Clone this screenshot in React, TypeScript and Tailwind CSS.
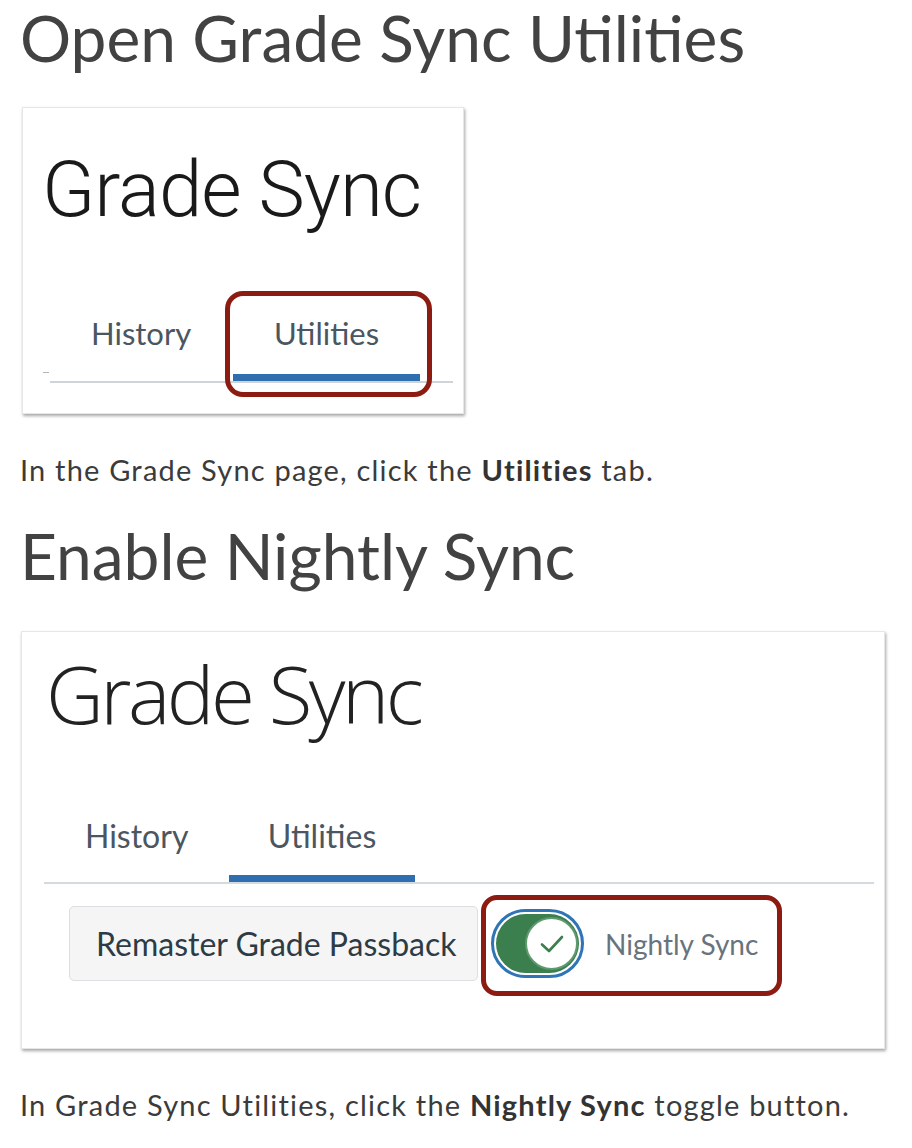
import React from 'react';

const Tab = ({ label, active, width, pl, size, gap }: { label: string; active?: boolean; width: string; pl?: string; size: string; gap: string }) => (
	<div className={`${width} flex flex-col`}>
		<div className={`pt-[20px] h-[48px] leading-[28px] ${size} text-[#4a5661] ${pl ?? 'text-center'}`}>{label}</div>
		<div className={gap} />
		<div className={`h-[7px] ${active ? 'bg-[#2f6fb0]' : ''}`} />
	</div>
);

const Check = () => (
	<svg width="26" height="22" viewBox="0 0 26 22" fill="none">
		<path d="M3 11.5 L10 18 L23 4" stroke="#3b7f4f" strokeWidth="2.6" strokeLinecap="round" strokeLinejoin="round" />
	</svg>
);

const App = () => {
	return (
		<div className="w-[912px] min-h-[1148px] bg-white pl-[20px] font-['Lato','Noto_Sans',sans-serif] text-[#3d3d3d]">
			<h1 className="text-[64px] leading-[76px] text-[#424242]">Open Grade Sync Utilities</h1>

			{/* screenshot 1 */}
			<div className="relative mt-[31px] ml-[2px] w-[442px] h-[307px] bg-white border border-[#e6e6e6] shadow-[1px_2px_3px_rgba(0,0,0,0.35)]">
				<div className="pt-[43px] pl-[19px] font-['Roboto','Liberation_Sans',sans-serif] font-light text-[78px] leading-[78px] text-[#1a1a1a] tracking-[-1px]">
					Grade Sync
				</div>
				<div className="absolute left-[20px] top-[264px] w-[6px] h-[1px] bg-[#b0b6bb]" />
				<div className="mt-[70px] ml-[27px] mr-[10px] flex border-b-2 border-[#cfd4d8]">
					<Tab label="History" width="w-[183px]" pl="pl-[41px]" size="text-[31px]" gap="h-[27px]" />
					<Tab label="Utilities" width="w-[187px]" size="text-[31px]" gap="h-[27px]" active />
				</div>
				<div className="absolute left-[202px] top-[183px] w-[207px] h-[106px] rounded-[18px] border-[5px] border-[#8c1c12]" />
			</div>

			<p className="mt-[38px] text-[29px] leading-[36px] tracking-[1.2px] text-[#3b3b3b]">
				In the Grade Sync page, click the <b className="text-[#333]">Utilities</b> tab.
			</p>

			<h2 className="mt-[30px] text-[64px] leading-[76px] text-[#424242]">Enable Nightly Sync</h2>

			{/* screenshot 2 */}
			<div className="relative mt-[37px] ml-[1px] w-[864px] h-[418px] bg-white border border-[#e6e6e6] shadow-[1px_2px_3px_rgba(0,0,0,0.35)]">
				<div className="pt-[21px] pl-[24px] font-['Open_Sans',sans-serif] font-light text-[80px] leading-[80px] tracking-[-3.5px] text-[#222]">
					Grade Sync
				</div>
				<div className="mt-[69px] ml-[22px] mr-[10px] flex border-b-2 border-[#d5dade]">
					<Tab label="History" width="w-[185px]" pl="pl-[41px]" size="text-[32px]" gap="h-[25px]" />
					<Tab label="Utilities" width="w-[186px]" size="text-[32px]" gap="h-[25px]" active />
				</div>
				<div className="mt-[22px] ml-[47px] flex items-center">
					<div className="w-[409px] h-[75px] flex items-center pl-[26px] bg-[#f5f5f5] border border-[#dcdfe1] rounded-[5px] text-[32px] text-[#2d3b45]">
						Remaster Grade Passback
					</div>
					<div className="ml-[13px] flex items-center">
						<span className="w-[93px] h-[69px] rounded-full border-[3px] border-[#2f74b5] p-[2px] flex">
							<span className="flex-1 rounded-full bg-[#3b7f4f] flex items-center justify-end pr-[1px]">
								<span className="w-[53px] h-[53px] rounded-full bg-white border-2 border-[#5f9a6f] flex items-center justify-center">
									<Check />
								</span>
							</span>
						</span>
						<span className="ml-[21px] text-[28px] text-[#68737c]">Nightly Sync</span>
					</div>
				</div>
				<div className="absolute left-[459px] top-[263px] w-[301px] h-[101px] rounded-[16px] border-[5px] border-[#8c1c12]" />
			</div>

			<p className="mt-[38px] text-[29px] leading-[36px] tracking-[1.2px] text-[#3b3b3b]">
				In Grade Sync Utilities, click the <b className="text-[#333]">Nightly Sync</b> toggle button.
			</p>
		</div>
	);
};

export default App;
